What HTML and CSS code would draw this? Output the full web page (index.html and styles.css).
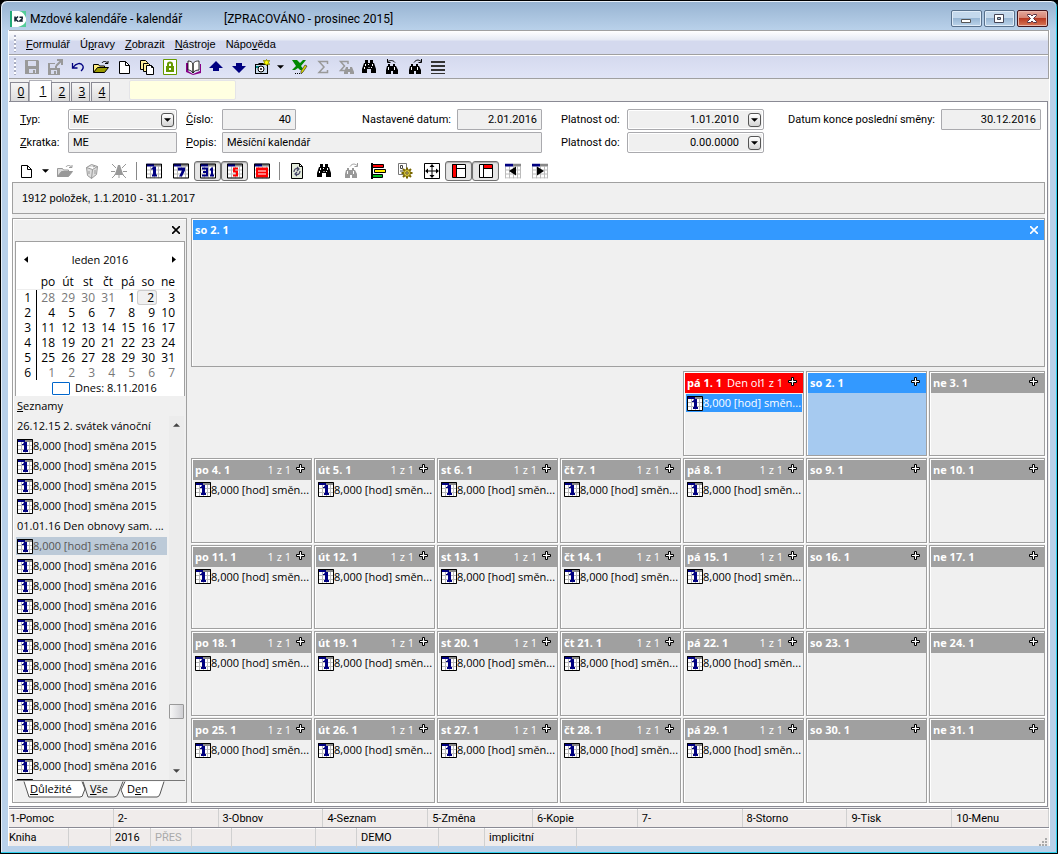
FILE: index.html
```html
<!DOCTYPE html>
<html lang="cs">
<head>
<meta charset="utf-8">
<title>Mzdové kalendáře - kalendář</title>
<link rel="stylesheet" href="styles.css">
</head>
<body>
<svg class="defs" aria-hidden="true">
  <symbol id="cal" viewBox="0 0 16 15"><path fill="#fff" d="M0 0h16v15H0z"/><path stroke="#bbb" fill="none" d="M.5 3v12M4.500 3v12M8.500 3v12M12.500 3v12M15.500 3v12M0 6.500h16M0 10.500h16M0 14.500h16"/><path fill="#888" d="M8 0h8v3H8z"/><path fill="#000080" d="M0 0h8v3H0z"/></symbol>
  <symbol id="item" viewBox="0 0 16 15"><use href="#cal" width="16" height="15"/><path fill="#000080" d="M7 3h3v8h1v2H6v-2h1V6H5V5h1z"/><path fill="none" stroke="#000" d="M.5.5h15v14H.5z"/></symbol>
  <symbol id="plus" viewBox="0 0 9 9"><path fill="#fff" stroke="#000" d="M3.500.5h2v3h3v2h-3v3h-2v-3h-3v-2h3z"/></symbol>
  <symbol id="binoc" viewBox="0 0 16 16"><path d="M4 1h3v3h2V1h3v3h1l2 6v4h-5v-4H6v4H1v-4l2-6h1z"/><path stroke="#fff" fill="none" d="M4.500 5v2M3.500 8v2M11.500 5v2M10.500 8v1M7.500 5v1M8 8v1"/></symbol>
  <symbol id="binoc-s" viewBox="0 0 16 16"><path d="M4 5h2v2h3V5h2v2h1l2 4v4H9v-3H7v3H2v-4l1-4h1z"/><path stroke="#fff" fill="none" d="M4.500 8v3M10.500 8v3"/></symbol>
  <symbol id="newdoc" viewBox="0 0 16 16"><path fill="#fff" stroke="#000" stroke-width="1" d="M3.500 2.500h6l4 4v8h-10z"/><path fill="none" stroke="#000" d="M9.500 2.500v4h4"/></symbol>
  <symbol id="folder" viewBox="0 0 18 16"><path fill="#ffec80" stroke="#000" d="M1.500 13.500v-8h5l1 1.500h5v2.500"/><path fill="#9a9a00" stroke="#000" d="M1.500 13.500l4-5h11l-4 5z"/><path fill="none" stroke="#000" d="M10 4c1-2 4-2 5.500 0M16 2v2.500h-3"/></symbol>
  <symbol id="folder-g" viewBox="0 0 18 16"><path fill="#ddd" stroke="#999" d="M1.500 13.500v-8h5l1 1.500h5v2.500"/><path fill="#999" stroke="#999" d="M1.500 13.500l4-5h11l-4 5z"/><path fill="none" stroke="#999" d="M10 4c1-2 4-2 5.500 0M16 2v2.500h-3"/></symbol>
  <symbol id="arrow" viewBox="0 0 8 4"><path d="M0 0h8L4 4z"/></symbol>
</svg>
<div class="window">
  <header class="titlebar">
    <svg class="logo" viewBox="0 0 16 16"><path fill="#fff" d="M0 0h16v16H0z"/><path fill="#2a7" d="M0 0h2v16H0z"/><path fill="#5c9" d="M9 0c4 1 6 4 7 7V0zM16 10c-1 3-4 5-8 6h8z"/><path fill="none" stroke="#123" stroke-width="1.500" d="M5 5.500v5M8 5.500L5.500 8 8 10.500M9.500 6.300h2.700v1.500L9.800 10h3"/></svg>
    <h1 class="title">Mzdové kalendáře - kalendář</h1>
    <span class="title">[ZPRACOVÁNO - prosinec 2015]</span>
    <div class="winbtns">
      <button class="winbtn" aria-label="Minimalizovat"><svg viewBox="0 0 28 15"><path fill="#fff" stroke="#555" d="M9.500 8.500h9v3h-9z"/></svg></button>
      <button class="winbtn" aria-label="Maximalizovat"><svg viewBox="0 0 28 15"><path fill="#fff" stroke="#445" d="M9.500 3.500h9v8h-9z"/><path fill="#9bc" stroke="#445" d="M12.500 6.500h3v2h-3z"/></svg></button>
      <button class="winbtn close" aria-label="Zavřít"><svg viewBox="0 0 28 15"><path fill="#fff" stroke="#534" d="M9.500 3.500h3L14 5l1.500-1.500h3v1l-3 3 3 3v1h-3L14 10l-1.500 1.500h-3v-1l3-3-3-3z"/></svg></button>
    </div>
  </header>
  <div class="client">
    <nav class="menubar"><span class="grip"></span>
      <button><u>F</u>ormulář</button><button>Ú<u>p</u>ravy</button><button><u>Z</u>obrazit</button><button><u>N</u>ástroje</button><button>Nápo<u>v</u>ěda</button>
    </nav>
    <div class="toolbar"><span class="grip"></span>
      <button aria-label="Uložit"><svg viewBox="0 0 16 16"><path fill="#999" d="M1 1h13l1 1v13H1z"/><path fill="#d8dcee" d="M4 2h8v5H4zM5 10h7v4H5z"/><path fill="#999" d="M9 11h2v3H9z"/></svg></button>
      <button aria-label="Uložit jako"><svg viewBox="0 0 16 16"><path fill="#999" d="M1 4h7v3h2v2h3v7H1z"/><path fill="#d8dcee" d="M3 5h5v4H3zM4 11h6v4H4z"/><path fill="#999" d="M7 12h2v3H7z"/><path fill="none" stroke="#999" stroke-width="2" d="M9 7l5-5M10 1h5v5"/></svg></button>
      <button aria-label="Zpět"><svg viewBox="0 0 16 16"><path fill="none" stroke="#000080" stroke-width="1.300" d="M2.500 4v5h5M3 8.500C6 4 11 3 13 7c1 3-1 4-2 5"/></svg></button>
      <button aria-label="Otevřít"><svg class="wide"><use href="#folder"/></svg></button>
      <button aria-label="Nový"><svg><use href="#newdoc"/></svg></button>
      <button aria-label="Kopie"><svg viewBox="0 0 16 16"><path fill="#fe9" stroke="#000" d="M1.500 1.500h5l2 2v7h-7z"/><path fill="#fe9" stroke="#000" d="M4.500 4.500h5l2 2v6h-7z"/><path fill="#fff" stroke="#000" d="M7.500 6.500h5l2 2v7h-7zM12.500 6.500v2h2"/></svg></button>
      <button aria-label="Zámek"><svg viewBox="0 0 16 16"><path fill="#fff" stroke="#690" d="M1.500.5h13v15h-13z"/><path fill="#690" d="M4 7h8v6H4z"/><path fill="none" stroke="#690" stroke-width="2" d="M6 7V5c0-2 4-2 4 0v2"/><path fill="#fff" d="M7 9h2v2H7z"/></svg></button>
      <button aria-label="Kniha"><svg viewBox="0 0 16 16"><path fill="#808" d="M1 4h2v8l5 3 7-3V5h1v9l-8 2-7-3z"/><path fill="#fff" stroke="#000" stroke-width=".8" d="M3 2c3 0 4 1 5 3v9c-1-2-3-3-5-3zM8 5c1-2 2-3 6-3v9c-3 0-5 1-6 3z"/></svg></button>
      <button aria-label="Nahoru"><svg viewBox="0 0 16 16"><path fill="#000080" d="M8 2l7 7h-4v3H5V9H1z"/></svg></button>
      <button aria-label="Dolů"><svg viewBox="0 0 16 16"><path fill="#000080" d="M8 14l7-7h-4V4H5v3H1z"/></svg></button>
      <button aria-label="Fotoaparát"><svg viewBox="0 0 16 16"><path d="M1 5h3l1-1h5l1 1h3v10H1z"/><path fill="#cde" d="M2 6h11v8H2z"/><path fill="#088" d="M2 7h3v2H2z"/><circle cx="7" cy="10" r="3" fill="#fff" stroke="#000"/><circle cx="7" cy="10" r="1" fill="#000"/><path stroke="#880" fill="#ff0" d="M9.500 4.500l1-1-1-2 2 .5 1-1.500 1 1.500 2-.5-1 2 1 2-2-.5-1 1.500-1-1.500z"/></svg></button>
      <button class="drop" aria-label="Další"><svg><use href="#arrow"/></svg></button>
      <button aria-label="Excel"><svg viewBox="0 0 16 16"><path fill="#080" d="M0 1h5l3 3 3-3h3L9 7l3 4H8L6 9l-3 2H0l4-4z"/><path fill="none" stroke="#000" stroke-dasharray="1 1" d="M3 14.500h6"/><path fill="#dd0" stroke="#333" stroke-width=".7" d="M9 12l4-6 2 1-4 6-2 2z"/></svg></button>
      <button aria-label="Součet"><svg viewBox="0 0 16 16"><path fill="none" stroke="#999" stroke-width="1.500" d="M12.500 5V2.500H4l5 5.500-5 5.500h8.500V11"/></svg></button>
      <button aria-label="Součet výběru"><svg viewBox="0 0 16 16"><path fill="none" stroke="#999" stroke-width="1.500" d="M10 5V2.500H2.500l4 4.500-4 4.500H7"/><path fill="#999" d="M8 8h2v2h2V8h2l2 5v2h-4v-2h-2v2H6v-2z"/></svg></button>
      <button aria-label="Hledat"><svg><use href="#binoc"/></svg></button>
      <button aria-label="Hledat předchozí"><svg viewBox="0 0 16 16"><use href="#binoc-s"/><path fill="none" stroke="#000" d="M11 3.500C9 1 6 1 3 3M3.500 0v3.500h3"/></svg></button>
      <button aria-label="Hledat další"><svg viewBox="0 0 16 16"><use href="#binoc-s"/><path fill="none" stroke="#000" d="M7 3.500c2-3 5-3 7-1M14.500 0v3.500h-3"/></svg></button>
      <button aria-label="Nabídka"><svg viewBox="0 0 16 16"><path fill="#333" d="M1 2h14v2H1zM1 6h14v2H1zM1 10h14v2H1zM1 14h14v1H1z"/></svg></button>
    </div>
    <div class="pages">
      <div class="pagetabs"><button>0</button><button class="active">1</button><button>2</button><button>3</button><button>4</button></div>
      <input class="quick" aria-label="Rychlé hledání">
    </div>
    <main class="page">
      <form class="form">
        <label for="typ"><u>T</u>yp:</label>
        <div class="field"><select id="typ"><option>ME</option></select><span class="dd"><svg><use href="#arrow"/></svg></span></div>
        <label class="mid" for="cislo"><u>Č</u>íslo:</label>
        <input id="cislo" class="box num" value="40">
        <label class="right" for="nast">Nastavené datum:</label>
        <input id="nast" class="box num" value="2.01.2016">
        <label class="far" for="od">Platnost od:</label>
        <div class="field date"><input id="od" class="num" value="1.01.2010"><button type="button" class="dd" aria-label="Vybrat datum"><svg><use href="#arrow"/></svg></button></div>
        <label class="right" for="konec">Datum konce poslední směny:</label>
        <input id="konec" class="box num" value="30.12.2016">
        <label for="zkr"><u>Z</u>kratka:</label>
        <input id="zkr" class="box" value="ME">
        <label class="mid" for="popis"><u>P</u>opis:</label>
        <input id="popis" class="box span3" value="Měsíční kalendář">
        <label class="far" for="do">Platnost do:</label>
        <div class="field date"><input id="do" class="num" value="0.00.0000"><button type="button" class="dd" aria-label="Vybrat datum"><svg><use href="#arrow"/></svg></button></div>
      </form>
      <div class="caltools">
        <button aria-label="Nový"><svg><use href="#newdoc"/></svg></button>
        <button class="drop" aria-label="Další"><svg><use href="#arrow"/></svg></button>
        <button aria-label="Otevřít"><svg class="wide"><use href="#folder-g"/></svg></button>
        <button aria-label="Smazat"><svg viewBox="0 0 16 16"><path fill="#ddd" stroke="#999" d="M2.500 4.500l5-3 6 2-1 8-5 4-4-3zM2.500 4.500l6 2 5-3M8.500 6.500l-1 9"/><path stroke="#999" d="M5 8v3M11 7v4M9 4l2-1"/></svg></button>
        <button aria-label="Upozornění"><svg viewBox="0 0 16 16"><path fill="#999" d="M7 2h2l3 9 1 1H3l1-1z"/><path stroke="#999" d="M1 1l4 4M15 1l-4 4M0 8.500h4M12 8.500h4M1 15l3-3M15 15l-3-3M8 12v3"/></svg></button>
        <span class="sep"></span>
        <button aria-label="Den"><svg viewBox="0 0 16 15"><use href="#item"/></svg></button>
        <button aria-label="Týden"><svg viewBox="0 0 16 15"><use href="#cal"/><path fill="#000080" d="M5 4h7v3l-3 6H6l3-6H5z"/><path fill="none" stroke="#000" d="M.5.5h15v14H.5z"/></svg></button>
        <button class="on" aria-label="Měsíc"><svg viewBox="0 0 16 15"><use href="#cal"/><path fill="none" stroke="#000080" stroke-width="2" d="M2 5h5v7H2M3 8.500h4M12 4v9M10 6h1M10 12h4"/><path fill="none" stroke="#000" d="M.5.5h15v14H.5z"/></svg></button>
        <button class="on" aria-label="Pracovní týden"><svg viewBox="0 0 16 15"><use href="#cal"/><path fill="none" stroke="#f00" stroke-width="2" d="M11 5H7v3h3v4H6"/><path fill="none" stroke="#000" d="M.5.5h15v14H.5z"/></svg></button>
        <button aria-label="Seznam"><svg viewBox="0 0 16 15"><use href="#cal"/><path fill="#f00" d="M2 4h12v10H2z"/><path stroke="#fff" d="M4 7.500h8M4 10.500h8"/><path fill="none" stroke="#000" d="M.5.5h15v14H.5z"/></svg></button>
        <span class="sep"></span>
        <button aria-label="Obnovit"><svg viewBox="0 0 16 16"><path fill="#e4ecdc" stroke="#000" d="M2.500.5h8l3 3v12h-11zM10.500.5v3h3"/><path fill="none" stroke="#446" stroke-width="1.200" d="M5 9c0-3 2-4 4-3M8 4l2 2-2 2M11 8c0 3-2 4-4 3M8 9l-2 2 2 2"/></svg></button>
        <button aria-label="Hledat"><svg><use href="#binoc"/></svg></button>
        <button aria-label="Hledat další"><svg class="dim" viewBox="0 0 16 16"><use href="#binoc-s"/><path fill="none" stroke="#999" d="M7 3.500c2-3 5-3 7-1M14.500 0v3.500h-3"/></svg></button>
        <button aria-label="Barvy"><svg viewBox="0 0 16 16"><path d="M1 0h2v16H1z"/><path fill="#f00" stroke="#000" d="M2.500 1.500h11v3h-11z"/><path fill="#fe0" stroke="#000" d="M4.500 6.500h11v3h-11z"/><path fill="#0b2" stroke="#000" d="M2.500 11.500h10v3h-10z"/></svg></button>
        <button aria-label="Nastavení"><svg viewBox="0 0 16 16"><path fill="#fff" stroke="#777" d="M1.500.5h8v11h-8z"/><path fill="none" stroke="#444" d="M3.500 2.500h2v3h-2zM3 8h3"/><path stroke="#760" stroke-width="2" d="M10 4.500v11M4.500 10h11M6 6l8 8M14 6l-8 8"/><circle cx="10" cy="10" r="3.500" fill="#dc4" stroke="#760"/><circle cx="10" cy="10" r="1.200" fill="#fff" stroke="#540"/></svg></button>
        <button aria-label="Přizpůsobit"><svg viewBox="0 0 16 16"><path fill="#fff" stroke="#000" d="M.5.5h15v15H.5z"/><path stroke="#000" d="M8 3v10M3 8h10"/><path d="M8 1l2.500 3h-5zM8 15l2.500-3h-5zM1 8l3-2.500v5zM15 8l-3-2.500v5z"/></svg></button>
        <button class="on" aria-label="Panel vlevo"><svg viewBox="0 0 16 16"><path fill="#f00" d="M1 1h4v13H1z"/><path fill="#fff" d="M5 1h10v13H5z"/><path fill="none" stroke="#000" d="M1.500 1.500h13v13h-13zM5.500 2v12M6 5.500h8"/></svg></button>
        <button class="on" aria-label="Panel nahoře"><svg viewBox="0 0 16 16"><path fill="#fff" d="M1 1h14v13H1z"/><path fill="#f00" d="M6 1h8v4H6z"/><path fill="none" stroke="#000" d="M1.500 1.500h13v13h-13zM5.500 2v12M6 5.500h8"/></svg></button>
        <button aria-label="Předchozí"><svg viewBox="0 0 16 15"><use href="#cal"/><path d="M11 3v9L4 7.500z"/></svg></button>
        <button aria-label="Následující"><svg viewBox="0 0 16 15"><use href="#cal"/><path d="M5 3v9l7-4.500z"/></svg></button>
      </div>
      <div class="info">1912 položek, 1.1.2010 - 31.1.2017</div>
      <div class="work">
        <aside class="side">
          <div class="sidehead"><button aria-label="Zavřít panel"><svg viewBox="0 0 8 8"><path stroke="#000" stroke-width="1.600" d="M0 0l8 8M8 0L0 8"/></svg></button></div>
          <div class="mini">
            <div class="minihead"><button aria-label="Předchozí měsíc"><svg viewBox="0 0 5 8"><path d="M5 0v8L0 4z"/></svg></button><span>leden 2016</span><button aria-label="Další měsíc"><svg viewBox="0 0 5 8"><path d="M0 0v8l5-4z"/></svg></button></div>
            <table class="minitable"><thead><tr><th></th><th>po</th><th>út</th><th>st</th><th>čt</th><th>pá</th><th>so</th><th>ne</th></tr></thead><tbody id="mini"></tbody></table>
            <div class="today"><span></span>Dnes: 8.11.2016</div>
          </div>
          <div class="lists"><u>S</u>eznamy</div>
          <div class="listwrap">
            <ul class="list" id="list"></ul>
            <div class="scroll"><svg viewBox="0 0 8 4"><path fill="#444" d="M4 0l4 4H0z"/></svg><span class="thumb"></span><svg viewBox="0 0 8 4"><path fill="#444" d="M0 0h8L4 4z"/></svg></div>
          </div>
          <div class="sidetabs">
            <button class="t1"><svg viewBox="0 0 65 17"><path fill="#fff" stroke="#555" d="M1 .5l5 15.500h51q3 0 3-3l2-5-3-7.500"/></svg><span><u>D</u>ůležité</span></button><button class="t2"><svg viewBox="0 0 42 17"><path fill="none" stroke="#555" d="M0 .5l5 15.500h26q3 0 4-3l5-12.500"/></svg><span><u>V</u>še</span></button><button class="t3"><svg viewBox="0 0 46 17"><path fill="#fff" stroke="#555" d="M5 .5L1 9l3 7h33q2 0 3-3l4-12.500"/></svg><span>D<u>e</u>n</span></button>
          </div>
        </aside>
        <section class="right-pane">
          <div class="detail"><div class="detailhead"><span>so 2. 1</span><button aria-label="Zavřít detail"><svg viewBox="0 0 8 8"><path stroke="#fff" stroke-width="1.600" d="M0 0l8 8M8 0L0 8"/></svg></button></div></div>
          <div class="month" id="month"></div>
        </section>
      </div>
    </main>
    <div class="fkeys"><button>1-Pomoc</button><button>2-</button><button>3-Obnov</button><button>4-Seznam</button><button>5-Změna</button><button>6-Kopie</button><button>7-</button><button>8-Storno</button><button>9-Tisk</button><button>10-Menu</button></div>
    <footer class="status"><span>Kniha</span><span></span><span>2016</span><span class="off">PŘES</span><span></span><span></span><span></span><span>DEMO</span><span></span><span>implicitní</span><span class="last"><svg viewBox="0 0 8 8"><path fill="#aaa" d="M6 0h2v2H6zM3 3h2v2H3zM6 3h2v2H6zM0 6h2v2H0zM3 6h2v2H3zM6 6h2v2H6z"/></svg></span></footer>
  </div>
</div>
<script src="app.js"></script>
</body>
</html>
```
FILE: app.js
```js
const names = ["po", "út", "st", "čt", "pá", "so", "ne"];
const icon = (id, cls) => `<svg class="${cls}"><use href="#${id}"/></svg>`;

// Mini calendar: January 2016 starts on a Friday.
let rows = "";
for (let w = 0; w < 6; w++) {
  let cells = `<th>${w + 1}</th>`;
  for (let d = 0; d < 7; d++) {
    const n = w * 7 + d - 3;
    const out = n < 1 || n > 31;
    const label = n < 1 ? n + 31 : n > 31 ? n - 31 : n;
    cells += `<td class="${out ? "out" : n === 2 ? "sel" : ""}">${label}</td>`;
  }
  rows += `<tr>${cells}</tr>`;
}
document.getElementById("mini").innerHTML = rows;

const shift = (year, cls = "") =>
  `<li class="${cls}">${icon("item", "item")}<span>8,000 [hod] směna ${year}</span></li>`;
document.getElementById("list").innerHTML =
  "<li>26.12.15 2. svátek vánoční</li>" + shift(2015).repeat(4) +
  "<li>01.01.16 Den obnovy sam. ...</li>" + shift(2016, "picked") + shift(2016).repeat(11) +
  `<li>${icon("item", "item")}</li>`;

// Month grid
let html = "";
for (let n = 1; n <= 31; n++) {
  const col = (n + 3) % 7;
  const work = col < 5;
  const cls = n === 1 ? "holiday" : n === 2 ? "current" : "";
  html += `<article class="day ${cls}"><header><b>${names[col]} ${n}. 1</b>` +
    `<span class="note">${n === 1 ? "Den ob" : ""}</span>` +
    (work ? "<span>1 z 1</span>" : "") +
    `<button aria-label="Přidat">${icon("plus", "plus")}</button></header>` +
    (work ? `<div class="entry">${icon("item", "item")}<span>8,000 [hod] směn...</span></div>` : "") +
    "</article>";
}
document.getElementById("month").innerHTML = html;
```
FILE: styles.css
```css
* { box-sizing: border-box; }
body { margin: 0; font: 11px/14px "Open Sans", "Noto Sans", sans-serif; color: #000; background: #000; }
button, input, select { font: inherit; color: inherit; margin: 0; padding: 0; border: 0; background: none; border-radius: 0; }
svg { display: block; width: 16px; height: 16px; flex: none; }
.defs { position: absolute; width: 0; height: 0; }
h1 { margin: 0; font-weight: 400; }
ul { margin: 0; padding: 0; list-style: none; }

.window { height: 100vh; display: flex; flex-direction: column; padding: 0 7px 7px 7px; background: #b9d1ea; border: 1px solid #000; box-shadow: inset -1px -1px #2fd0ee, inset 1px 1px #e8f0f8; border-radius: 7px 7px 0 0; }
.titlebar { height: 28px; flex: none; display: flex; align-items: center; padding: 5px 8px 0 8px; margin: 1px -6px 0; background: linear-gradient(#98b4d2, #b9d1ea); border-radius: 6px 6px 0 0; }
.logo { margin-right: 4px; }
.title { font-size: 12px; line-height: 16px; font-family: Roboto, sans-serif; }
h1.title { width: 194px; }
.winbtns { margin-left: auto; display: flex; gap: 2px; }
.winbtn { width: 31px; height: 17px; border: 1px solid #58708c; border-radius: 2px; background: linear-gradient(#c4d8ec 50%, #98b6d4 50%, #bcd4ea); box-shadow: inset 0 0 0 1px #e0ecf8; }
.winbtn svg { width: 28px; height: 15px; }
.winbtn.close { border-color: #43141c; background: linear-gradient(#e4a89c 0, #d4806e 50%, #b83a22 50%, #d87858); box-shadow: inset 0 0 0 1px #eab8ac; }

.client { flex: 1; min-height: 0; display: flex; flex-direction: column; background: #f0f0f0; border-left: 1px solid #fff; border-right: 1px solid #fff; }
.menubar, .toolbar { display: flex; align-items: center; flex: none; }
.menubar { height: 25px; border: 1px solid #a0a0a0; border-width: 1px 1px 1px 0; background: linear-gradient(#fff, #e6eaf4 9px, #d4d9ee 10px); font-family: "Liberation Sans", sans-serif; padding-top: 2px; }
.menubar button { margin-right: 10px; }
.toolbar { height: 24px; border: 1px solid #a0a0a0; border-width: 0 1px 1px 0; box-shadow: inset 0 1px #fff; background: linear-gradient(#d4d9ee, #e0e4f6); }
.grip { width: 2px; height: 17px; margin: 0 10px 0 5px; background: repeating-linear-gradient(#a8acc0 0 2px, #fff 2px 4px); }
.toolbar .grip { margin-right: 4px; }
.toolbar button { width: 23px; display: flex; justify-content: center; }
.toolbar .drop { width: 15px; }
svg.wide { width: 18px; }
.drop svg { width: 7px; height: 4px; }
.pages { flex: none; height: 22px; display: flex; align-items: flex-end; }
.pagetabs { display: flex; align-items: flex-end; padding-left: 1px; }
.pagetabs button { width: 19px; height: 19px; margin-right: 1px; border: 1px solid #8a8a94; border-bottom: 0; background: linear-gradient(#f6f6f6, #dcdcdc); text-decoration: underline; font-size: 12px; padding-left: 3px; }
.pagetabs .active { width: 23px; height: 21px; margin: 0 -1px 0 -1px; background: #fff; border-color: #b0b0b8; padding-left: 5px; }
.quick { width: 107px; height: 20px; margin: 0 0 1px 18px; background: #ffffe1; border: 1px solid #e4e4e8; border-radius: 2px; }

.page { flex: 1; min-height: 0; display: flex; flex-direction: column; background: #fff; border: 1px solid #8a8a94; border-left: 0; padding: 7px 2px 3px 3px; margin-right: 1px; }
.form { flex: none; display: grid; grid-template-columns: 48px 109fr 45px 74fr 161px 85fr 85px 137fr 177px 100fr; grid-template-rows: 21px 21px; row-gap: 2px; align-items: center; padding: 0 4px 0 8px; font-family: Roboto, sans-serif; }
.mid { padding-left: 9px; }
.far { padding-left: 19px; }
.right { text-align: right; padding-right: 6px; }
.box, .field { width: 100%; min-width: 0; height: 21px; background: #f0f0f0; border: 1px solid #aaaaae; border-radius: 1px; }
.box { padding: 0 4px; }
.field { display: flex; align-items: center; border-radius: 2px; box-shadow: inset 0 0 0 1px #fff; }
.field input, .field select { flex: 1; min-width: 0; height: 19px; appearance: none; padding: 0 6px 0 4px; }
.date input { padding-right: 9px; }
.num { text-align: right; }
.span3 { grid-column: span 3; }
.dd { width: 13px; height: 14px; margin-right: 2px; border: 1px solid #555; border-radius: 3px; background: linear-gradient(#fff, #d4d4d4); display: flex; align-items: center; justify-content: center; }
.dd svg { width: 7px; height: 4px; }

.caltools { flex: none; display: flex; align-items: center; height: 20px; margin: 8px 0 1px; }
.caltools button { width: 27px; height: 20px; display: flex; align-items: center; justify-content: center; }
.caltools .drop { width: 12px; }
.caltools .on { border: 1px solid #707070; border-radius: 3px; background: #e6e6e6; box-shadow: inset 0 1px 1px #aaa; }
.sep { width: 1px; height: 18px; margin: 0 3px 0 4px; background: #888; }
.dim { fill: #999; }
.info { flex: none; height: 32px; display: flex; align-items: center; padding-left: 9px; background: #f0f0f0; border: 1px solid #a0a0a0; font-family: "Liberation Sans", sans-serif; }
.work { flex: 1; min-height: 0; display: flex; gap: 4px; padding-top: 4px; background: #f0f0f0; }

.side { width: 175px; flex: none; min-height: 0; display: flex; flex-direction: column; border: 1px solid #a0a0a0; box-shadow: inset 1px 1px #fff; padding: 0 1px 4px 2px; }
.sidehead { height: 22px; flex: none; display: flex; justify-content: flex-end; align-items: center; padding-right: 5px; }
.sidehead svg, .detailhead svg { width: 8px; height: 8px; }
.mini { flex: none; height: 155px; background: #fff; border: 1px solid #a0a0a0; border-bottom: 0; font-size: 12px; overflow: hidden; }
.minihead { display: flex; justify-content: space-between; align-items: center; height: 15px; margin: 10px 8px 8px 8px; font-size: 11px; }
.minihead svg { width: 4px; height: 7px; }
.minitable { border-collapse: separate; border-spacing: 0; table-layout: fixed; width: 160px; margin-left: 1px; }
.minitable th, .minitable td { width: 20px; height: 15px; padding: 0; text-align: right; font-weight: 400; line-height: 15px; }
.minitable thead th { height: 14px; line-height: 14px; text-align: center; padding-left: 2px; border-bottom: 1px solid #eee; }
.minitable tbody th { border-right: 1px solid #000; padding-right: 5px; }
.minitable tbody td { padding-right: 2px; }
.out { color: #777; }
.minitable .sel { background: #f0f0f0; box-shadow: inset 0 0 0 1px #ccc; border-radius: 3px; padding-right: 3px; }
.today { display: flex; align-items: center; gap: 5px; padding-left: 36px; height: 16px; font-size: 11px; }
.today span { width: 18px; height: 13px; border: 1px solid #06c; border-radius: 1px; }
.lists { flex: none; height: 20px; line-height: 19px; padding-left: 2px; }
.listwrap { flex: 1; min-height: 0; display: flex; border-bottom: 1px solid #777; }
.list { flex: 1; min-width: 0; overflow: hidden; padding: 0 2px 0 1px; }
.list li { height: 20px; display: flex; align-items: center; padding-left: 1px; white-space: nowrap; }
.item { width: 16px; height: 15px; }
.list .picked { background: linear-gradient(transparent 1px, #bccad8 1px 19px, transparent 19px); color: #555; }
.scroll { width: 15px; flex: none; display: flex; flex-direction: column; align-items: center; padding: 7px 0; background: #ececec; margin-right: 1px; }
.scroll svg { width: 7px; height: 4px; }
.thumb { width: 15px; height: 15px; margin: auto 0 50px; border: 1px solid #999; border-radius: 1px; background: linear-gradient(90deg, #f6f6f6, #cfcfd3); }
.sidetabs { flex: none; height: 17px; display: flex; padding-left: 8px; }
.sidetabs button { display: grid; grid-template-columns: 100%; height: 17px; flex: none; }
.sidetabs svg, .sidetabs span { grid-area: 1 / 1; }
.sidetabs span { text-align: left; padding-left: 7px; line-height: 16px; }
.sidetabs .t1 { width: 60px; }
.sidetabs .t1 svg { width: 65px; height: 17px; }
.sidetabs .t2 { width: 37px; }
.sidetabs .t2 svg { width: 42px; height: 17px; }
.sidetabs .t3 { width: 46px; }
.sidetabs .t3 svg { width: 46px; height: 17px; }

.right-pane { flex: 1; min-width: 0; display: flex; flex-direction: column; gap: 4px; }
.detail { flex: none; height: 149px; border: 1px solid #a0a0a0; box-shadow: inset 1px 1px #fff; padding: 1px 0 0 1px; }
.detailhead { height: 20px; display: flex; align-items: center; justify-content: space-between; padding: 0 6px 0 2px; background: #3399ff; color: #fff; font-weight: 700; }
.month { flex: 1; min-height: 0; display: grid; grid-template-columns: repeat(6, 121fr) 116fr; grid-auto-rows: minmax(0, 1fr); gap: 2px; }
.day { min-width: 0; border: 1px solid #a0a0a0; box-shadow: inset 1px 1px #fff, 1px 1px #fff; padding: 1px 0 0 1px; overflow: hidden; }
.day:first-child { grid-column: 5; }
.day header { height: 20px; display: flex; align-items: center; padding: 0 6px 0 2px; background: #a0a0a0; color: #fff; white-space: nowrap; }
.day .note { flex: 1; min-width: 0; overflow: hidden; margin-left: 5px; }
.day button { margin: 0 0 3px 5px; }
.plus { width: 9px; height: 9px; }
.holiday header { background: #f00; }
.current, .current header { background-color: #3399ff; }
.day.current { background: #a6caf0; }
.entry { height: 18px; display: flex; align-items: center; margin: 1px 0 0 1px; padding-left: 1px; white-space: nowrap; overflow: hidden; }
.holiday .entry { background: #3399ff; color: #fff; margin-right: 1px; }

.fkeys, .status { flex: none; background: #f0eceb; font-family: Roboto, sans-serif; }
.fkeys { height: 19px; margin-top: 1px; border-top: 1px solid #8a8a94; display: grid; grid-template-columns: repeat(9, 105fr) 97fr; }
.fkeys button { text-align: left; padding: 2px 0 0 4px; border-right: 1px solid #d0d0d0; box-shadow: inset 0 1px #fff; }
.fkeys button:first-child { padding-left: 1px; }
.status { height: 19px; border-top: 1px solid #8a8a94; box-shadow: inset 0 1px #fff; display: grid; grid-template-columns: 60px 42px 40px 41px 40px 84px 41px 82px 46px 92px 1fr; line-height: 20px; }
.status span { border-right: 1px solid #d0d0d0; padding-left: 4px; }
.status span:first-child { padding-left: 0; }
.status .off { color: #aaa; }
.status .last { border: 0; display: flex; justify-content: flex-end; align-items: flex-end; padding: 0 2px 2px; }
.last svg { width: 8px; height: 8px; }
```
